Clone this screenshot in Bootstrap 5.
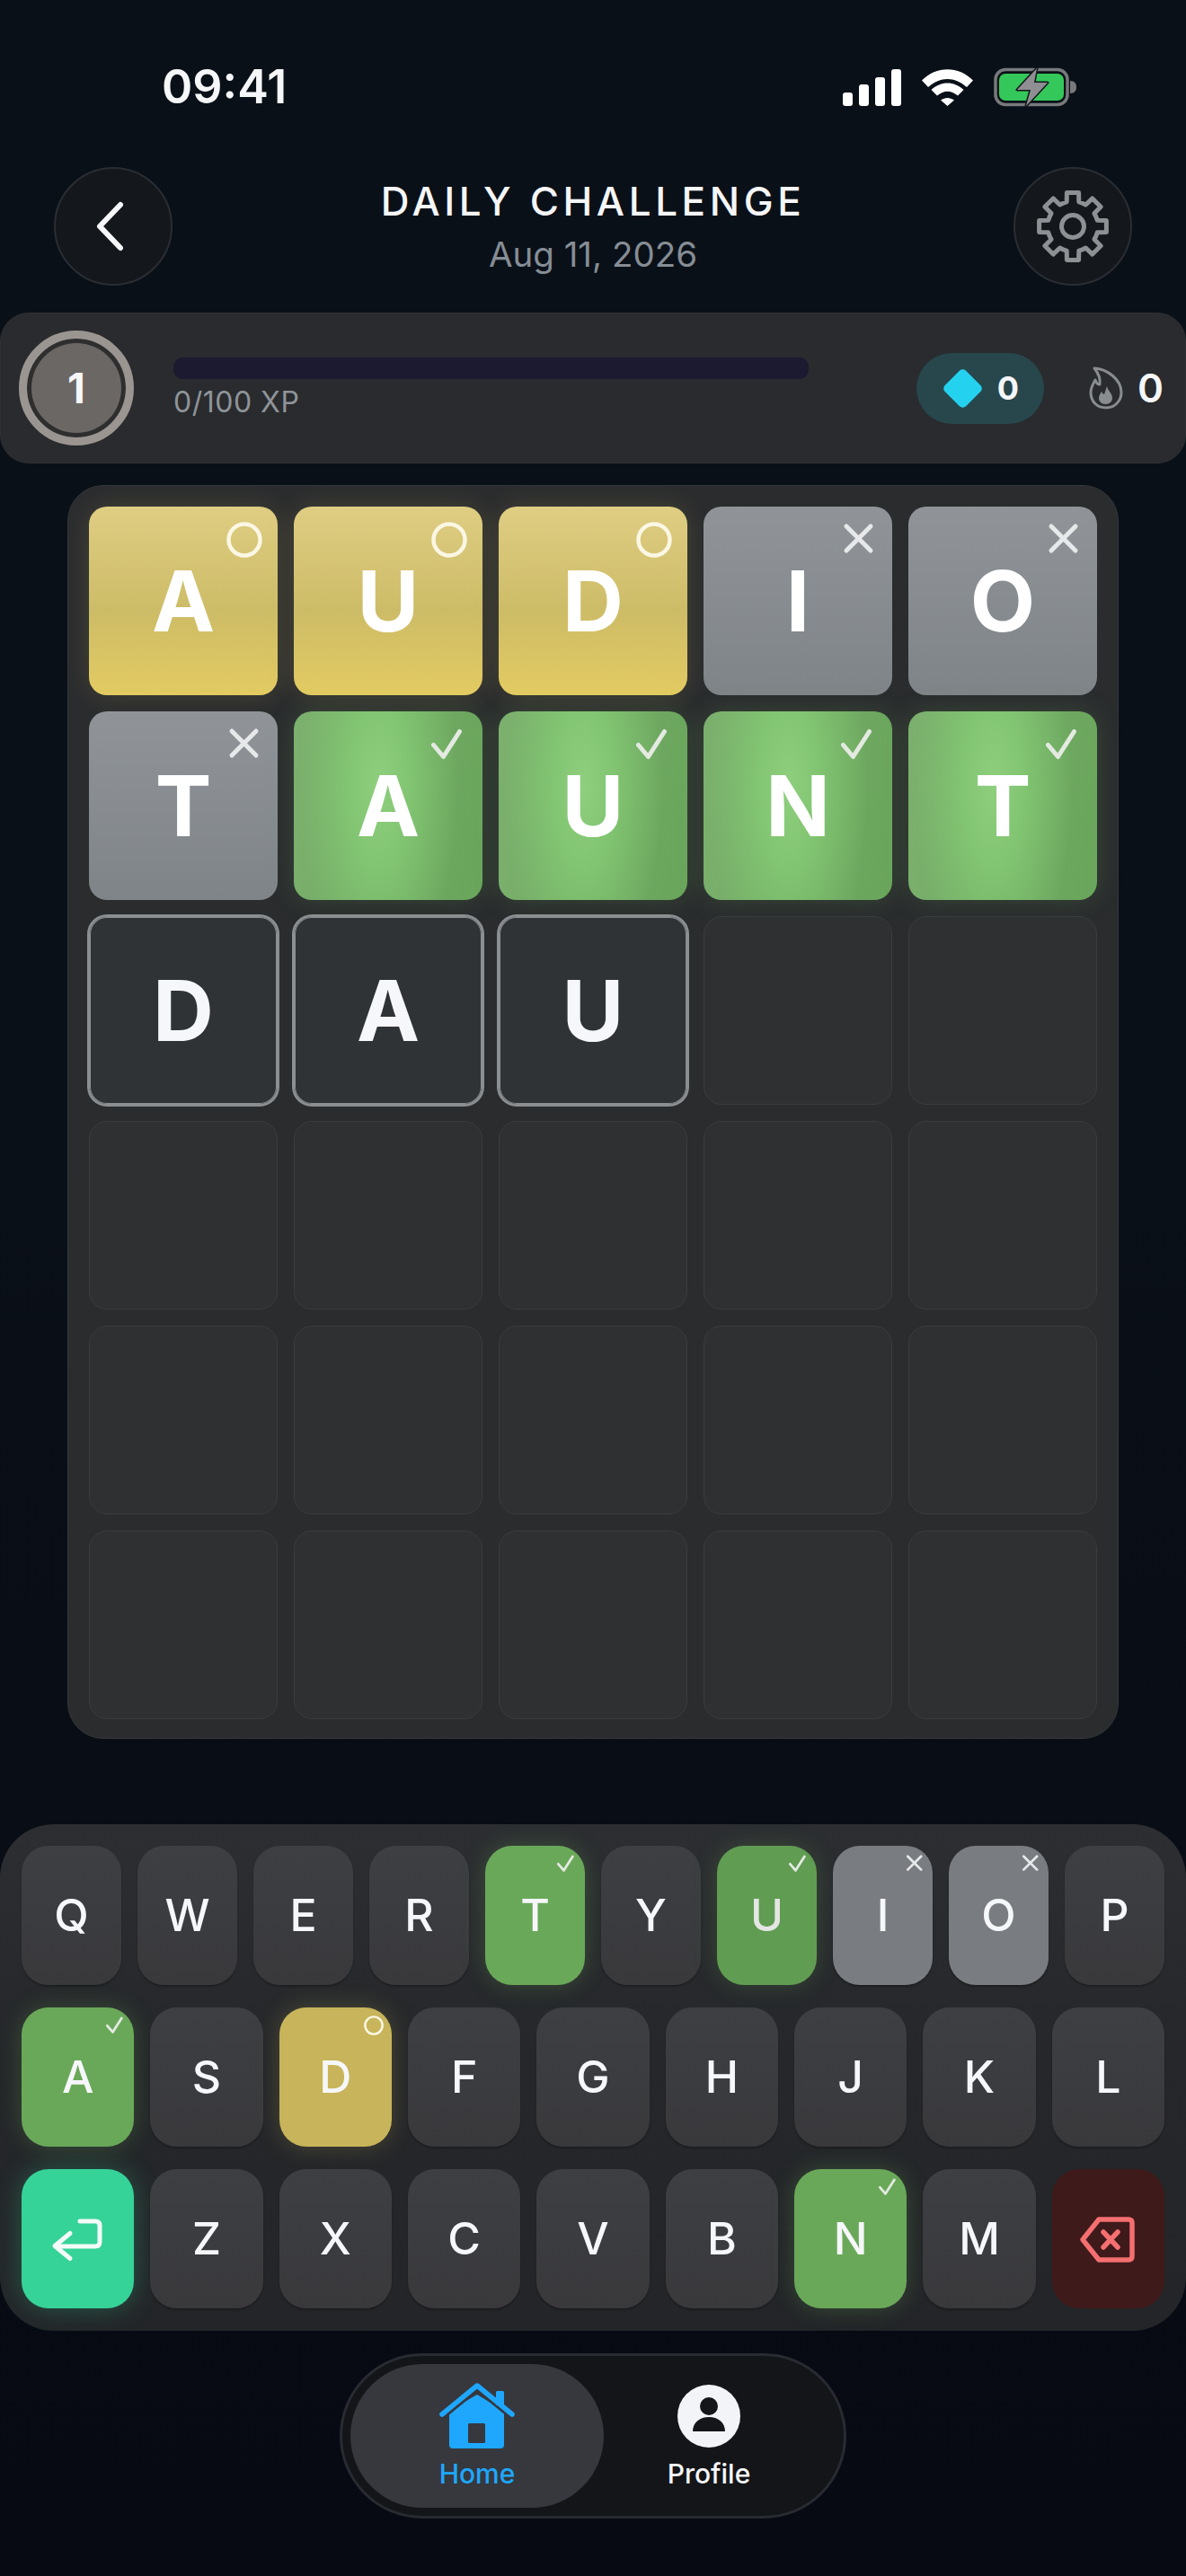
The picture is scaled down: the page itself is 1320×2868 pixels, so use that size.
<!doctype html>
<html lang="en">
<head>
    <meta charset="utf-8">
    <meta name="viewport" content="width=device-width, initial-scale=1">
    <title>Daily Challenge</title>
    <link href="https://cdn.jsdelivr.net/npm/bootstrap@5.3.3/dist/css/bootstrap.min.css" rel="stylesheet">
    <style>
        body {
            height: 2868px;
            overflow: hidden;
            background: linear-gradient(180deg, #0a1018 0%, #0a1018 45%, #090d15 70%, #070913 100%);
            font-family: Inter, "Liberation Sans", sans-serif;
            color: #f5f6f8;
        }

        .status-row { padding: 75px 122px 0 180px; height: 118px; }
        .clock { font-size: 52px; font-weight: 600; line-height: 43px; }
        .status-icons { gap: 23px; }
        .status-icons svg { display: block; }

        .top-row { margin-top: 68px; padding: 0 60px; }
        .round-btn {
            width: 132px;
            height: 132px;
            border-radius: 50%;
            background: #14171b;
            border: 2px solid #2a2e34;
        }
        .title-text { font-size: 44px; font-weight: 500; letter-spacing: 4.6px; line-height: 44px; margin-top: 16px; }
        .date-text { font-size: 38.5px; color: #868d95; line-height: 46px; margin-top: 14px; }

        .xp-strip {
            margin-top: 30px;
            height: 168px;
            padding: 0 24px 0 20px;
            background: #292b2e;
            border-radius: 32px;
            border: 1px solid #2e3134;
        }
        .level-ring {
            width: 128px;
            height: 128px;
            border-radius: 50%;
            background: #6b6764;
            border: 9px solid #9a9590;
            box-shadow: inset 0 0 0 5px #2f2e2f;
            font-size: 46px;
            font-weight: 700;
        }
        .xp-col { width: 707px; margin-left: 44px; padding-top: 2px; }
        .xp-track { height: 24px; border-radius: 10px; background: #1b1a30; }
        .xp-label { font-size: 32px; color: #8f9499; line-height: 40px; margin-top: 6px; letter-spacing: .5px; }
        .gem-pill {
            height: 79px;
            padding: 0 28px 0 35px;
            gap: 22px;
            border-radius: 40px;
            background: #27474d;
            font-size: 36px;
            font-weight: 700;
        }
        .gem-shape { width: 33px; height: 33px; border-radius: 5px; background: #24d2f0; transform: rotate(45deg); }
        .flame-group { margin-left: 50px; gap: 16px; font-size: 44px; font-weight: 600; }

        .board {
            margin: 24px 75px 0;
            padding: 23px;
            height: 1396px;
            gap: 18px;
            border-radius: 40px;
            background: #2a2c2e;
            border: 1px solid #34373a;
        }
        .tile-row { gap: 18px; }
        .tile {
            position: relative;
            width: 210px;
            height: 210px;
            border-radius: 20px;
            background: #2e3032;
            border: 1px solid #3a3c3e;
            font-size: 94px;
            font-weight: 700;
            color: #fff;
        }
        .tile-typed {
            background: #303336;
            border-color: #8b8f92;
            box-shadow: 0 0 0 2px #8b8f92, inset 0 0 0 1px #8b8f92;
            color: #f6f7fa;
        }
        .tile-near {
            border: 0;
            background: linear-gradient(180deg, #dfcd83 0%, #cdbc67 55%, #e3cb62 100%);
            box-shadow: 0 0 30px rgba(226, 202, 98, .16);
        }
        .tile-miss {
            border: 0;
            background: linear-gradient(180deg, #909499 0%, #7f8488 100%);
        }
        .tile-hit {
            border: 0;
            background: radial-gradient(ellipse 42% 110% at 45% 40%, #8ecf7e 0%, rgba(132, 202, 116, .8) 40%, rgba(120, 190, 105, 0) 100%), linear-gradient(100deg, #7cb06e 0%, #69a55b 100%);
            box-shadow: 0 0 30px rgba(120, 200, 100, .18);
        }
        .tile-mark { position: absolute; top: 17px; right: 17px; width: 40px; height: 40px; }

        .keyboard {
            margin-top: 95px;
            height: 564px;
            padding: 24px;
            gap: 25px;
            border-radius: 60px;
            background: linear-gradient(180deg, #2c2e31 0%, #25272a 45%, #232528 100%);
        }
        .key-row { gap: 18px; }
        .key-cap {
            position: relative;
            flex: 1 1 0;
            height: 155px;
            border-radius: 30px;
            background: linear-gradient(180deg, #3d3f42 0%, #39393c 100%);
            box-shadow: 0 2px 2px rgba(0, 0, 0, .25);
            font-size: 50px;
            font-weight: 500;
            color: #f6f7fa;
        }
        .key-hit { background: #6aa859; box-shadow: 0 0 26px rgba(106, 168, 89, .3); }
        .key-hit-dim { background: #609c52; color: #e4e6e4; box-shadow: 0 0 26px rgba(106, 168, 89, .25); }
        .key-near { background: #c8b45a; box-shadow: 0 0 26px rgba(200, 180, 90, .25); }
        .key-miss { background: #797c80; }
        .key-enter { background: #36d399; box-shadow: 0 0 30px rgba(54, 211, 153, .3); }
        .key-del { background: #3f1a1a; box-shadow: none; }
        .key-mark { position: absolute; top: 9px; right: 9px; width: 22px; height: 22px; }

        .tab-pill {
            width: 564px;
            height: 184px;
            margin: 25px auto 0;
            padding: 9px;
            border-radius: 92px;
            background: #141518;
            border: 3px solid #292b32;
        }
        .tab-item { font-size: 30px; font-weight: 500; line-height: 36px; }
        .tab-active { width: 282px; height: 160px; border-radius: 80px; background: #36383e; color: #1ea7fd; }
        .tab-plain { width: 234px; height: 160px; }
        .tab-item svg { display: block; margin-bottom: 9px; }
    </style>
</head>

<body>
    <svg width="0" height="0" class="d-block" aria-hidden="true">
        <symbol id="m-circle" viewBox="0 0 40 40"><circle cx="20" cy="20" r="17.5" fill="none" stroke="#fbf7e4" stroke-width="4.5"/></symbol>
        <symbol id="m-x" viewBox="0 0 40 40"><path d="M6 5L33 32M33 5L6 32" fill="none" stroke="#e6e8ea" stroke-width="5" stroke-linecap="round"/></symbol>
        <symbol id="m-check" viewBox="0 0 40 40"><path d="M2.5 20.5L13.5 33.5L31.5 5.5" fill="none" stroke="#e4eae2" stroke-width="5" stroke-linecap="round" stroke-linejoin="round"/></symbol>
    </svg>

    <div class="status-row d-flex justify-content-between align-items-start">
        <div class="clock">09:41</div>
        <div class="status-icons d-flex align-items-center">
            <svg width="65" height="41" viewBox="0 0 65 41" fill="#fff">
                <rect x="0" y="26" width="11" height="15" rx="3"/>
                <rect x="18" y="17" width="11" height="24" rx="3"/>
                <rect x="36" y="9" width="11" height="32" rx="3"/>
                <rect x="54" y="0" width="11" height="41" rx="3"/>
            </svg>
            <svg width="57" height="41" viewBox="0 0 57 41" fill="#fff">
                <path d="M0 12.5C16 -4 41 -4 57 12.5L50 20C36 8 21 8 7 20Z"/>
                <path d="M10.5 23C21 13 36 13 46.5 23L40 29.5C32 23 25 23 17 29.5Z"/>
                <path d="M21 34.5C26 31 31 31 36 34.5L28.5 41Z"/>
            </svg>
            <svg width="92" height="44" viewBox="0 0 92 44">
                <rect x="2" y="2.5" width="80" height="39" rx="11" fill="none" stroke="#77797c" stroke-width="3.5"/>
                <rect x="6" y="7" width="72" height="30" rx="7" fill="#34c759"/>
                <path d="M85 15C90 15 92 18 92 22C92 26 90 29 85 29Z" fill="#77797c"/>
                <path d="M48 1L26 25H41L36 43L60 17H45Z" fill="#8e8e93" stroke="#14181c" stroke-width="3" stroke-linejoin="round" paint-order="stroke"/>
            </svg>
        </div>
    </div>

    <div class="top-row d-flex justify-content-between align-items-start">
        <div class="round-btn d-flex align-items-center justify-content-center">
            <svg width="40" height="60" viewBox="0 0 40 60"><path d="M28 6L5 30L28 54" fill="none" stroke="#f5f6f8" stroke-width="6" stroke-linecap="round" stroke-linejoin="round"/></svg>
        </div>
        <div class="text-center">
            <div class="title-text">DAILY CHALLENGE</div>
            <div class="date-text">Aug 11, 2026</div>
        </div>
        <div class="round-btn d-flex align-items-center justify-content-center">
            <svg width="90" height="90" viewBox="-45 -45 90 90" fill="none" stroke="#8e9194" stroke-width="5" stroke-linejoin="round">
                <path d="M27.2 -6.8L37.4 -6.6V6.6L27.2 6.8A28 28 0 0 1 24 14.4L31.1 21.8L21.8 31.1L14.4 24A28 28 0 0 1 6.8 27.2L6.6 37.4H-6.6L-6.8 27.2A28 28 0 0 1 -14.4 24L-21.8 31.1L-31.1 21.8L-24 14.4A28 28 0 0 1 -27.2 6.8L-37.4 6.6V-6.6L-27.2 -6.8A28 28 0 0 1 -24 -14.4L-31.1 -21.8L-21.8 -31.1L-14.4 -24A28 28 0 0 1 -6.8 -27.2L-6.6 -37.4H6.6L6.8 -27.2A28 28 0 0 1 14.4 -24L21.8 -31.1L31.1 -21.8L24 -14.4A28 28 0 0 1 27.2 -6.8Z"/>
                <circle r="12.5"/>
            </svg>
        </div>
    </div>

    <div class="xp-strip d-flex align-items-center">
        <div class="level-ring d-flex align-items-center justify-content-center flex-shrink-0">1</div>
        <div class="xp-col">
            <div class="xp-track"></div>
            <div class="xp-label">0/100 XP</div>
        </div>
        <div class="gem-pill d-flex align-items-center ms-auto">
            <div class="gem-shape"></div>
            <span>0</span>
        </div>
        <div class="flame-group d-flex align-items-center">
            <svg width="38" height="48" viewBox="0 0 38 48">
                <path d="M6 2C20 3 36 14 36 29C36 39 28 46 19 46C9 46 2 39 2 29C2 23 5 19 7 15C8 18 10 20 12 20C13 14 10 7 6 2Z" fill="none" stroke="#8a8d90" stroke-width="3" stroke-linejoin="round"/>
                <path d="M20 22C21 27 26 30 26 35C26 39 23 42 18.5 42C14 42 11 39 11 35C11 32 13 30 14 28C15 30 16 31 17 31C18 28 19 25 20 22Z" fill="#8a8d90"/>
            </svg>
            <span>0</span>
        </div>
    </div>

    <div class="board d-flex flex-column">
        <div class="tile-row d-flex">
            <div class="tile tile-near d-flex align-items-center justify-content-center">A<svg class="tile-mark"><use href="#m-circle"/></svg></div>
            <div class="tile tile-near d-flex align-items-center justify-content-center">U<svg class="tile-mark"><use href="#m-circle"/></svg></div>
            <div class="tile tile-near d-flex align-items-center justify-content-center">D<svg class="tile-mark"><use href="#m-circle"/></svg></div>
            <div class="tile tile-miss d-flex align-items-center justify-content-center">I<svg class="tile-mark"><use href="#m-x"/></svg></div>
            <div class="tile tile-miss d-flex align-items-center justify-content-center">O<svg class="tile-mark"><use href="#m-x"/></svg></div>
        </div>
        <div class="tile-row d-flex">
            <div class="tile tile-miss d-flex align-items-center justify-content-center">T<svg class="tile-mark"><use href="#m-x"/></svg></div>
            <div class="tile tile-hit d-flex align-items-center justify-content-center">A<svg class="tile-mark"><use href="#m-check"/></svg></div>
            <div class="tile tile-hit d-flex align-items-center justify-content-center">U<svg class="tile-mark"><use href="#m-check"/></svg></div>
            <div class="tile tile-hit d-flex align-items-center justify-content-center">N<svg class="tile-mark"><use href="#m-check"/></svg></div>
            <div class="tile tile-hit d-flex align-items-center justify-content-center">T<svg class="tile-mark"><use href="#m-check"/></svg></div>
        </div>
        <div class="tile-row d-flex">
            <div class="tile tile-typed d-flex align-items-center justify-content-center">D</div>
            <div class="tile tile-typed d-flex align-items-center justify-content-center">A</div>
            <div class="tile tile-typed d-flex align-items-center justify-content-center">U</div>
            <div class="tile"></div>
            <div class="tile"></div>
        </div>
        <div class="tile-row d-flex">
            <div class="tile"></div><div class="tile"></div><div class="tile"></div><div class="tile"></div><div class="tile"></div>
        </div>
        <div class="tile-row d-flex">
            <div class="tile"></div><div class="tile"></div><div class="tile"></div><div class="tile"></div><div class="tile"></div>
        </div>
        <div class="tile-row d-flex">
            <div class="tile"></div><div class="tile"></div><div class="tile"></div><div class="tile"></div><div class="tile"></div>
        </div>
    </div>

    <div class="keyboard d-flex flex-column">
        <div class="key-row d-flex">
            <div class="key-cap d-flex align-items-center justify-content-center">Q</div>
            <div class="key-cap d-flex align-items-center justify-content-center">W</div>
            <div class="key-cap d-flex align-items-center justify-content-center">E</div>
            <div class="key-cap d-flex align-items-center justify-content-center">R</div>
            <div class="key-cap key-hit d-flex align-items-center justify-content-center">T<svg class="key-mark"><use href="#m-check"/></svg></div>
            <div class="key-cap d-flex align-items-center justify-content-center">Y</div>
            <div class="key-cap key-hit-dim d-flex align-items-center justify-content-center">U<svg class="key-mark"><use href="#m-check"/></svg></div>
            <div class="key-cap key-miss d-flex align-items-center justify-content-center">I<svg class="key-mark"><use href="#m-x"/></svg></div>
            <div class="key-cap key-miss d-flex align-items-center justify-content-center">O<svg class="key-mark"><use href="#m-x"/></svg></div>
            <div class="key-cap d-flex align-items-center justify-content-center">P</div>
        </div>
        <div class="key-row d-flex">
            <div class="key-cap key-hit d-flex align-items-center justify-content-center">A<svg class="key-mark"><use href="#m-check"/></svg></div>
            <div class="key-cap d-flex align-items-center justify-content-center">S</div>
            <div class="key-cap key-near d-flex align-items-center justify-content-center">D<svg class="key-mark"><use href="#m-circle"/></svg></div>
            <div class="key-cap d-flex align-items-center justify-content-center">F</div>
            <div class="key-cap d-flex align-items-center justify-content-center">G</div>
            <div class="key-cap d-flex align-items-center justify-content-center">H</div>
            <div class="key-cap d-flex align-items-center justify-content-center">J</div>
            <div class="key-cap d-flex align-items-center justify-content-center">K</div>
            <div class="key-cap d-flex align-items-center justify-content-center">L</div>
        </div>
        <div class="key-row d-flex">
            <div class="key-cap key-enter d-flex align-items-center justify-content-center">
                <svg width="125" height="155" viewBox="0 0 125 155"><path d="M65 58H82Q87 58 87 63V81Q87 86 82 86H38M54 71.5L37 85.5L54 99.5" fill="none" stroke="#f2fbf7" stroke-width="5" stroke-linecap="round" stroke-linejoin="round"/></svg>
            </div>
            <div class="key-cap d-flex align-items-center justify-content-center">Z</div>
            <div class="key-cap d-flex align-items-center justify-content-center">X</div>
            <div class="key-cap d-flex align-items-center justify-content-center">C</div>
            <div class="key-cap d-flex align-items-center justify-content-center">V</div>
            <div class="key-cap d-flex align-items-center justify-content-center">B</div>
            <div class="key-cap key-hit d-flex align-items-center justify-content-center">N<svg class="key-mark"><use href="#m-check"/></svg></div>
            <div class="key-cap d-flex align-items-center justify-content-center">M</div>
            <div class="key-cap key-del d-flex align-items-center justify-content-center">
                <svg width="125" height="155" viewBox="0 0 125 155" fill="none" stroke="#f56f71" stroke-width="5.5" stroke-linecap="round" stroke-linejoin="round"><path d="M52 56H85Q89 56 89 60V97Q89 101 85 101H52L34 78.5Z"/><path d="M57 70L73 87M73 70L57 87"/></svg>
            </div>
        </div>
    </div>

    <div class="tab-pill d-flex">
        <div class="tab-item tab-active d-flex flex-column align-items-center justify-content-center">
            <svg width="84" height="74" viewBox="0 0 84 74">
                <path d="M11 31L42 13L72 31V69Q72 73 68 73H15Q11 73 11 69Z" fill="#1ea7fd"/>
                <path d="M3 35L42 3L81 35" fill="none" stroke="#36383e" stroke-width="11"/>
                <rect x="63" y="9" width="9" height="16" rx="1.5" fill="#1ea7fd"/>
                <path d="M3 35L42 3L81 35" fill="none" stroke="#1ea7fd" stroke-width="5.5" stroke-linecap="round" stroke-linejoin="round"/>
                <rect x="32" y="45" width="19" height="22" rx="1.5" fill="#36383e"/>
            </svg>
            <span>Home</span>
        </div>
        <div class="tab-item tab-plain d-flex flex-column align-items-center justify-content-center">
            <svg width="70" height="74" viewBox="0 0 70 74">
                <circle cx="35" cy="37" r="35" fill="#f3f4f8"/>
                <circle cx="35" cy="26" r="10" fill="#15161a"/>
                <path d="M17 54C17 44 25 38 35 38C45 38 53 44 53 54Z" fill="#15161a"/>
            </svg>
            <span>Profile</span>
        </div>
    </div>

    <script src="https://cdn.jsdelivr.net/npm/bootstrap@5.3.3/dist/js/bootstrap.bundle.min.js"></script>
</body>

</html>
